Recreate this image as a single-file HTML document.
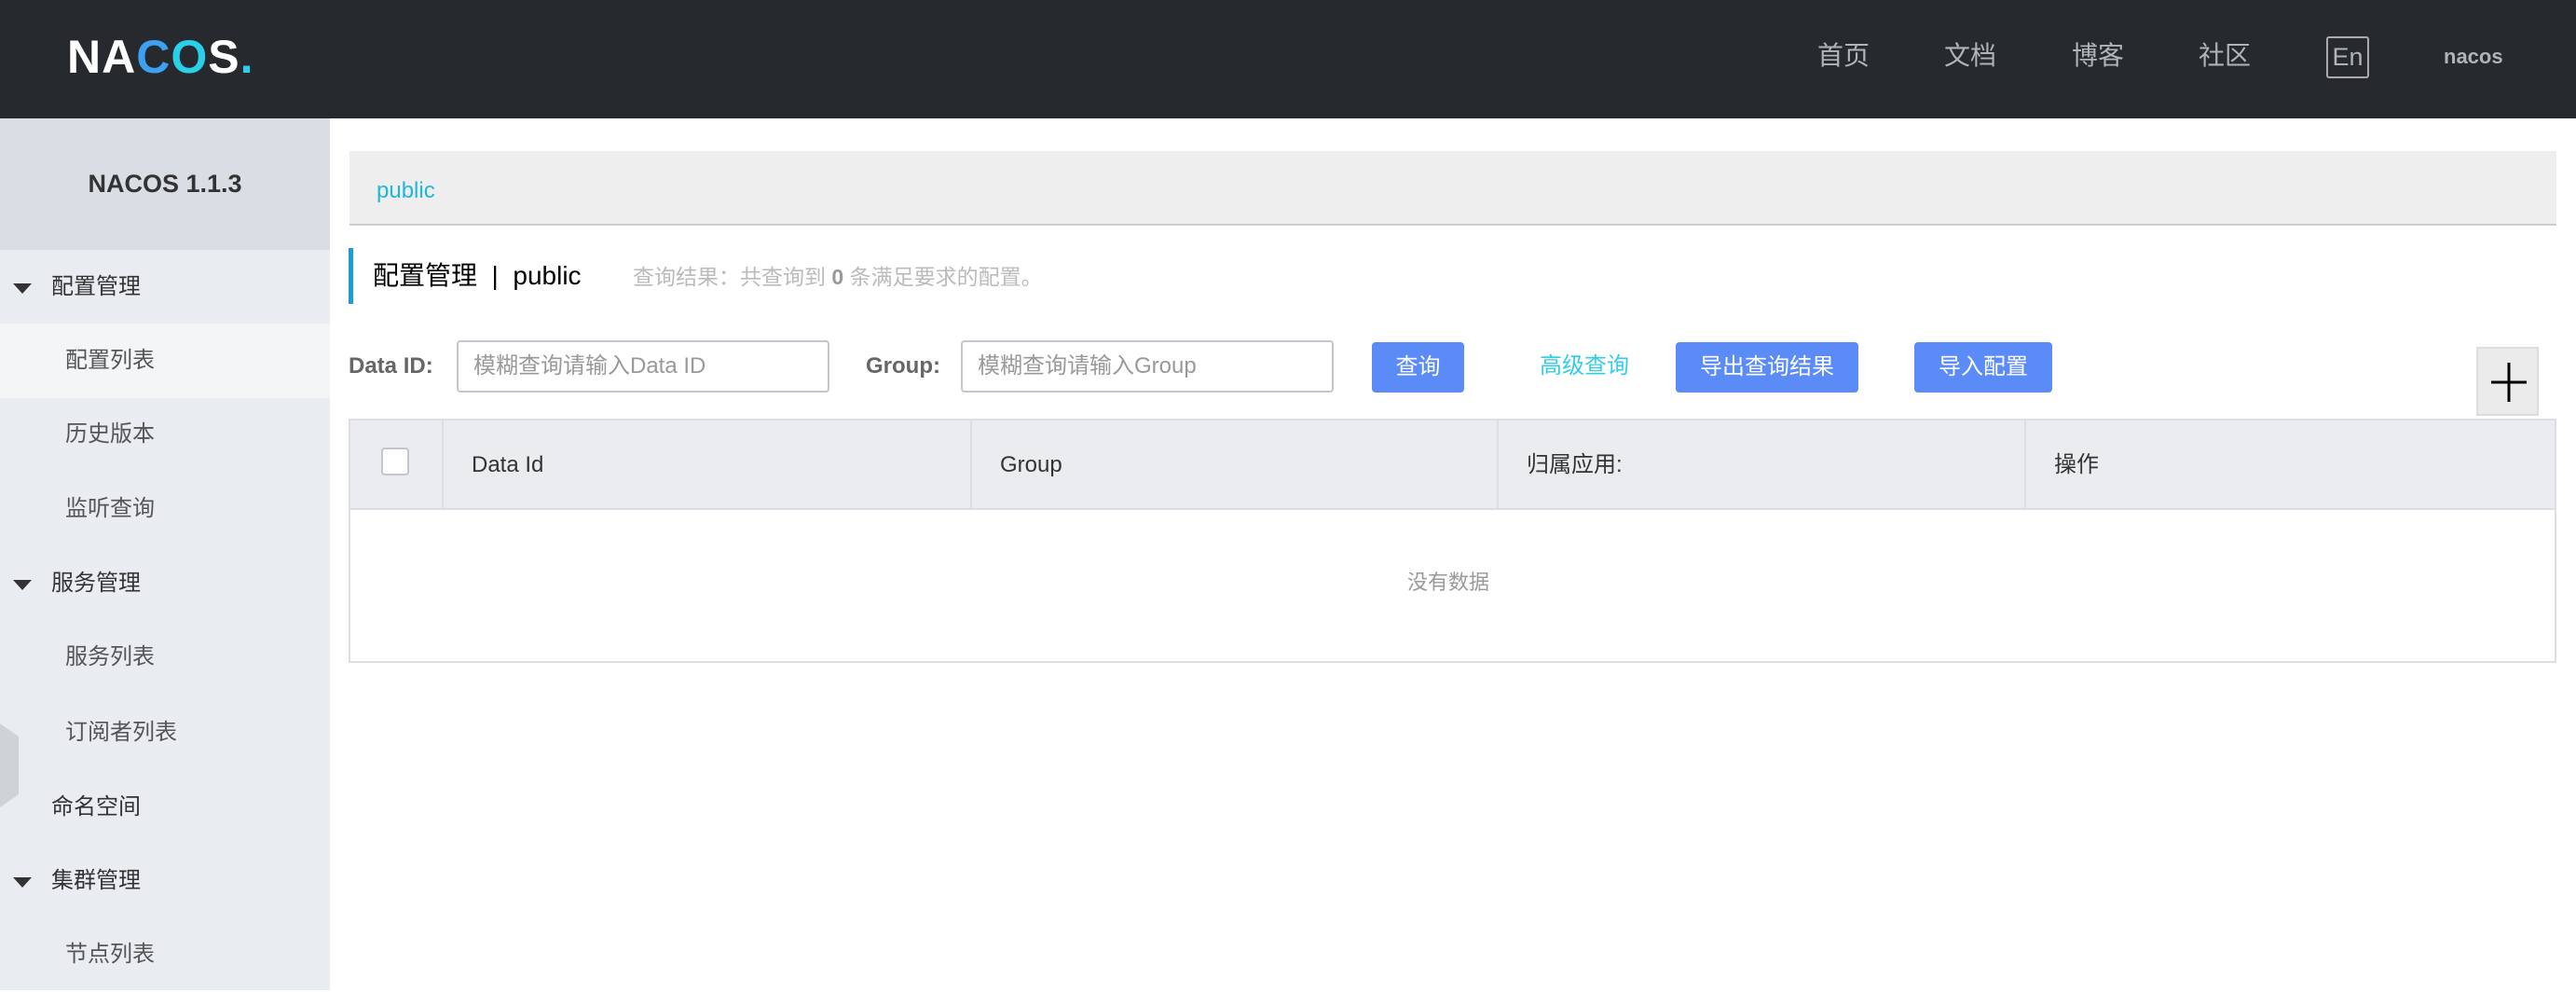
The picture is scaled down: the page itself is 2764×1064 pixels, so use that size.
<!DOCTYPE html>
<html><head><meta charset="utf-8"><style>
*{margin:0;padding:0;box-sizing:border-box}
body{width:2764px;height:1062px;overflow:hidden;background:#fff;font-family:"Liberation Sans","Noto Sans CJK SC",sans-serif;position:relative}
.a{position:absolute;white-space:nowrap}
.hdr{left:0;top:0;width:2764px;height:127px;background:#262a2f}
.nav{color:#b0b3b7;font-size:28px;top:40px;line-height:40px}
.side{left:0;top:127px;width:354px;height:935px;background:#e9ecf0}
.mi{font-size:24px;color:#333;line-height:80px;height:80px;width:354px;left:0}
.sub{color:#555;padding-left:70px}
.top{padding-left:55px}
.tri{position:absolute;left:14px;top:36px;width:0;height:0;border-left:10px solid transparent;border-right:10px solid transparent;border-top:11px solid #333}
.btn{background:#5b8bf7;color:#fff;font-size:24px;height:54px;line-height:54px;top:367px;border-radius:4px;text-align:center}
.inp{top:365px;height:56px;border:2px solid #c4c6cf;border-radius:4px;font-size:24px;color:#999;line-height:52px;padding-left:16px}
.th{top:451px;height:96px;line-height:96px;font-size:24px;color:#333;border-right:2px solid #dcdee3;padding-left:30px}
</style></head><body>
<div class="a hdr"></div>
<div class="a" style="left:72px;top:36px;font-size:50px;font-weight:bold;color:#fff;letter-spacing:1px;line-height:50px">NA<span style="color:#3ea0f0">C</span><span style="color:#2ad0ea">O</span>S<span style="color:#2ad0ea">.</span></div>
<div class="a nav" style="left:1950px">首页</div>
<div class="a nav" style="left:2086px">文档</div>
<div class="a nav" style="left:2223px">博客</div>
<div class="a nav" style="left:2359px">社区</div>
<div class="a" style="left:2496px;top:39px;width:46px;height:45px;border:2px solid #aaa;border-radius:3px;color:#b0b3b7;font-size:27px;line-height:41px;text-align:center">En</div>
<div class="a" style="left:2622px;top:46px;color:#b0b3b7;font-size:22px;font-weight:bold;line-height:30px">nacos</div>

<div class="a side"></div>
<div class="a" style="left:0;top:127px;width:354px;height:141px;background:#d9dee5;text-align:center;line-height:141px;font-size:27px;font-weight:bold;color:#333">NACOS 1.1.3</div>
<div class="a" style="left:0;top:347px;width:354px;height:80px;background:#f4f5f7"></div>
<svg class="a" style="left:0;top:776px" width="22" height="90"><polygon points="0,0 20,14 20,76 0,90" fill="#cfd3d8"/></svg>
<div class="a mi top" style="top:268px"><span class="tri"></span>配置管理</div>
<div class="a mi sub" style="top:347px">配置列表</div>
<div class="a mi sub" style="top:426px">历史版本</div>
<div class="a mi sub" style="top:506px">监听查询</div>
<div class="a mi top" style="top:586px"><span class="tri"></span>服务管理</div>
<div class="a mi sub" style="top:665px">服务列表</div>
<div class="a mi sub" style="top:746px">订阅者列表</div>
<div class="a mi top" style="top:826px">命名空间</div>
<div class="a mi top" style="top:905px"><span class="tri"></span>集群管理</div>
<div class="a mi sub" style="top:984px">节点列表</div>

<div class="a" style="left:375px;top:162px;width:2368px;height:80px;background:#eeeeee;border-bottom:2px solid #ccc"></div>
<div class="a" style="left:404px;top:190px;font-size:24px;color:#1fb7da;line-height:30px">public</div>
<div class="a" style="left:374px;top:266px;width:5px;height:60px;background:#209bd0"></div>
<div class="a" style="left:400px;top:278px;font-size:28px;color:#000;line-height:36px">配置管理 &nbsp;|&nbsp; public</div>
<div class="a" style="left:679px;top:282px;font-size:23px;color:#bbb;line-height:30px">查询结果：共查询到 <b style="color:#999">0</b> 条满足要求的配置。</div>

<div class="a" style="left:374px;top:378px;font-size:24px;font-weight:bold;color:#666;line-height:30px">Data ID:</div>
<div class="a inp" style="left:490px;width:400px">模糊查询请输入Data ID</div>
<div class="a" style="left:929px;top:378px;font-size:24px;font-weight:bold;color:#666;line-height:30px">Group:</div>
<div class="a inp" style="left:1031px;width:400px">模糊查询请输入Group</div>
<div class="a btn" style="left:1472px;width:99px">查询</div>
<div class="a" style="left:1652px;top:378px;font-size:24px;color:#33cde5;line-height:30px">高级查询</div>
<div class="a btn" style="left:1798px;width:196px">导出查询结果</div>
<div class="a btn" style="left:2054px;width:148px">导入配置</div>
<div class="a" style="left:2657px;top:372px;width:67px;height:74px;background:#ebebeb;border:2px solid #ddd"></div>
<svg class="a" style="left:2657px;top:372px" width="67" height="74"><path d="M35 17V59M16 38H54" stroke="#000" stroke-width="3"/></svg>

<div class="a" style="left:374px;top:449px;width:2369px;height:262px;border:2px solid #dcdee3"></div>
<div class="a" style="left:376px;top:451px;width:2365px;height:96px;background:#ebecf0;border-bottom:2px solid #dcdee3"></div>
<div class="a th" style="left:376px;width:100px"></div>
<div class="a" style="left:409px;top:480px;width:30px;height:30px;border:2px solid #c4c6cf;border-radius:4px;background:#fff"></div>
<div class="a th" style="left:476px;width:567px">Data Id</div>
<div class="a th" style="left:1043px;width:565px">Group</div>
<div class="a th" style="left:1608px;width:566px">归属应用:</div>
<div class="a th" style="left:2174px;width:567px;border-right:none">操作</div>
<div class="a" style="left:1510px;top:610px;font-size:22px;color:#999;line-height:30px">没有数据</div>
</body></html>
